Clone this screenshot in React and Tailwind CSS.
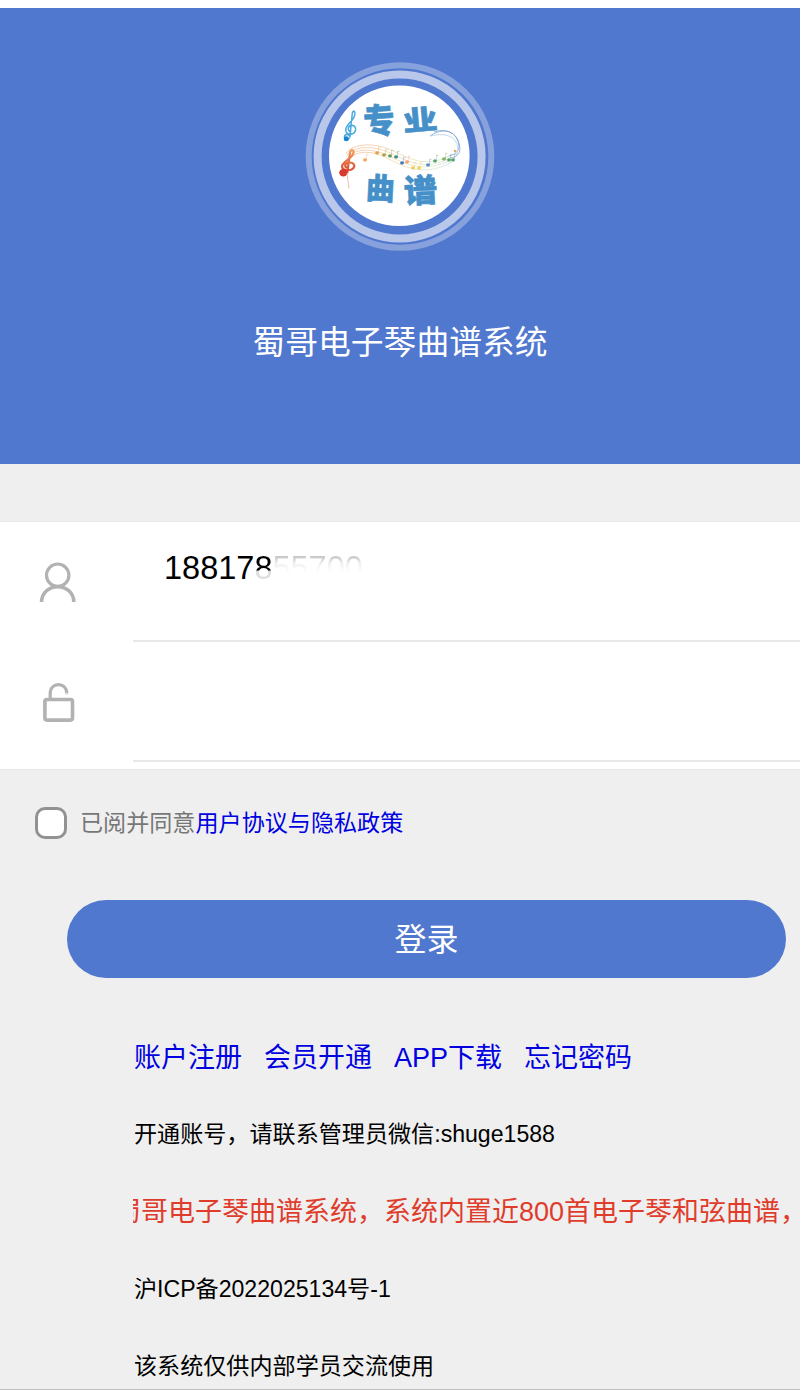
import { useState } from "react";

const links = ["账户注册", "会员开通", "APP下载", "忘记密码"];

const UserIcon = () => (
  <svg className="w-[38px] h-[42px]" viewBox="0 0 38 42" fill="none" stroke="#b2b2b2" strokeWidth="3.2">
    <circle cx="18.7" cy="13.2" r="11.2" />
    <path d="M2.6 40C2.6 31 9.6 24.7 18.7 24.7S34.8 31 34.8 40" strokeWidth="3.6" />
  </svg>
);

const LockIcon = () => (
  <svg className="w-8 h-10" viewBox="0 0 32 40" fill="none" stroke="#b2b2b2" strokeWidth="3.2">
    <rect x="1.9" y="17.5" width="27.6" height="20.6" rx="2" strokeWidth="3.6" />
    <path d="M7.2 16.5V12C7.2 6 10.8 2.7 15.5 2.7S23.4 6 23.8 10.8" />
    <circle cx="23.8" cy="11" r="0.3" strokeWidth="2.6" />
  </svg>
);

const CLEF =
  "M8 29C4 31 1 28 3 26s6-1 6 2L12 3c1-3 4-2 3 2-1 6-12 10-11 16 1 5 11 5 12-1 0-5-8-6-9-1 0 2 1 3 3 3";

const notes = [
  [365, 160, "#f0a25e"],
  [377, 153, "#e3a04a"],
  [384, 155, "#a9a64a"],
  [390, 156, "#629b52"],
  [396, 157, "#3e8b83"],
  [402, 163, "#3b79b8"],
  [407, 162, "#f0a080"],
  [413, 168, "#e6cf58"],
  [419, 168, "#e8d45e"],
  [428, 165, "#4a8fc6"],
  [435, 161, "#55a56d"],
  [444, 159, "#84b25c"],
  [449, 160, "#62a760"],
  [453, 160, "#55a080"],
];

const Logo = () => (
  <svg className="w-[200px] h-[200px] shrink-0" viewBox="300 56 200 200">
    <defs>
      <linearGradient id="staff" gradientUnits="userSpaceOnUse" x1="345" x2="460" y1="0" y2="0">
        <stop offset="0" stopColor="#ee9a70" />
        <stop offset="0.45" stopColor="#efc98a" />
        <stop offset="0.8" stopColor="#cfe0b8" />
        <stop offset="1" stopColor="#7fb0d8" />
      </linearGradient>
      <linearGradient id="clef" x1="0" x2="0" y1="0" y2="1">
        <stop offset="0" stopColor="#f0a060" />
        <stop offset="1" stopColor="#d83a2c" />
      </linearGradient>
    </defs>
    <circle cx="400" cy="156.5" r="91.3" fill="none" stroke="#86a1dc" strokeWidth="6" />
    <circle cx="399.6" cy="156.5" r="82" fill="none" stroke="#b9c8ea" strokeWidth="8" />
    <circle cx="399.3" cy="155.7" r="70.3" fill="#fff" />

    <g fill="none" stroke="url(#staff)" strokeWidth="0.7" opacity="0.8">
      <path d="M346 154C350 145 371 141 391 150S425 168 449 156" />
      <path d="M347 156C352 147 371 144 390 153S425 171 450 158" />
      <path d="M348 158C353 149 371 147 389 156S425 173 451 160" />
      <path d="M349 160C354 151 371 149 389 159S427 176 452 162" />
    </g>
    <g fill="none" stroke="#7fa5d0" strokeWidth="0.8">
      <path d="M430 136C440 129 452 129 457 139S457 154 449 156" />
      <path d="M434 132C445 128 456 132 459 143S457 157 450 158" />
      <path d="M430 136C443 133 452 135 456 142S457 158 451 160" stroke="#b5cfe6" />
    </g>
    {notes.map(([x, y, color]) => (
      <g key={x} stroke={color} fill={color}>
        <ellipse cx={x} cy={y} rx="1.8" ry="1.4" strokeWidth="0.3" />
        <path d={`M${x + 1.6} ${y}v-6l2 .5`} fill="none" strokeWidth="0.5" opacity="0.7" />
      </g>
    ))}
    <circle cx="455" cy="151" r="1.3" fill="#e8a860" />
    <g fill="none" strokeLinecap="round">
      <path d={CLEF} transform="translate(342.5 110) scale(0.82 0.98)" stroke="#4aabdf" strokeWidth="1.8" />
      <circle cx="346.3" cy="138.7" r="2.5" fill="#1683d4" />
      <path d={CLEF} transform="translate(338 149) scale(1.02 0.86)" stroke="url(#clef)" strokeWidth="2.2" />
      <circle cx="343.3" cy="172.8" r="3.8" fill="#d7392d" />
      <path d="M347 174l2 14" stroke="#eda99c" strokeWidth="0.8" />
    </g>

    <g
      className="font-['Noto_Sans_CJK_SC',sans-serif] font-black"
      fill="#4690c9"
      stroke="#4690c9"
      strokeWidth="0.6"
      strokeLinejoin="round"
      fontSize="32"
      textAnchor="middle"
    >
      <text transform="translate(380 133.5) rotate(-4) scale(0.98 1.08)">专</text>
      <text transform="translate(421 130) rotate(-5) scale(1.08 0.86)">业</text>
      <text transform="translate(380 199.5) rotate(3) scale(0.9 0.94)">曲</text>
      <text transform="translate(421 202.5) rotate(-3) scale(1.04 1.02)">谱</text>
    </g>
  </svg>
);

const App = () => {
  const [agreed, setAgreed] = useState(false);

  return (
    <div className="flex h-[1400px] w-[800px] flex-col overflow-hidden bg-white pt-2 font-['Liberation_Sans','Noto_Sans_CJK_SC',sans-serif] text-black">
      <header className="flex h-[456px] shrink-0 flex-col items-center bg-[#5178cf] pt-12">
        <Logo />
        <h1 className="mt-[63px] text-[32.8px] leading-[48px] whitespace-nowrap text-white">
          蜀哥电子琴曲谱系统
        </h1>
      </header>

      <main className="flex h-[926px] shrink-0 flex-col border-b border-[#bfbfbf] bg-[#efefef] pt-[57px]">
        <section className="h-[249px] shrink-0 border-y border-[#e8e8e8] bg-white">
          <div className="flex h-[120px]">
            <div className="w-[133px] pt-10 pl-[39px]">
              <UserIcon />
            </div>
            <div className="flex flex-1 items-start border-b-2 border-[#e8e8e8] pt-[26px] pl-[31px] text-[32.5px] leading-10">
              <span>18817</span>
              <span className="bg-linear-to-b from-black from-54% to-[#dedede] to-58% bg-clip-text text-transparent">8</span>
              <span className="bg-linear-to-b from-[#c4c4c4] from-20% via-[#f0f0f0] via-38% to-white to-62% bg-clip-text text-transparent">
                55700
              </span>
            </div>
          </div>
          <div className="flex h-[120px]">
            <div className="w-[133px] pt-10 pl-[43px]">
              <LockIcon />
            </div>
            <div className="flex-1 border-b-2 border-[#e8e8e8]" />
          </div>
        </section>

        <label className="mt-[37px] flex h-8 shrink-0 items-center pl-[35px] text-[23.1px] leading-8">
          <input
            type="checkbox"
            checked={agreed}
            onChange={(e) => setAgreed(e.target.checked)}
            className="mr-[13px] h-8 w-8 appearance-none rounded-[10px] border-[3px] border-[#929295] bg-white checked:bg-[#5178cf]"
          />
          <span className="text-[#777]">已阅并同意</span>
          <a className="text-[#0000e0]">用户协议与隐私政策</a>
        </label>

        <button
          type="button"
          className="mt-[61px] ml-[67px] h-[78px] w-[719px] shrink-0 rounded-full bg-[#5178cf] pt-px text-[32px] text-white"
        >
          登录
        </button>

        <div className="flex flex-col pt-[60px] pl-[134px] text-[23.1px] leading-10 whitespace-nowrap">
          <nav className="flex gap-[22px] text-[27px] text-[#0000e0]">
            {links.map((label) => (
              <a key={label}>{label}</a>
            ))}
          </nav>
          <p className="mt-9">开通账号，请联系管理员微信:shuge1588</p>
          <div className="mt-[38px] -ml-px flex overflow-hidden text-[27px] text-[#e03c2c]">
            <p className="-ml-[19px]">蜀哥电子琴曲谱系统，系统内置近800首电子琴和弦曲谱，</p>
          </div>
          <p className="mt-[37px]">沪ICP备2022025134号-1</p>
          <p className="mt-[37px]">该系统仅供内部学员交流使用</p>
        </div>
      </main>
    </div>
  );
};

export default App;
